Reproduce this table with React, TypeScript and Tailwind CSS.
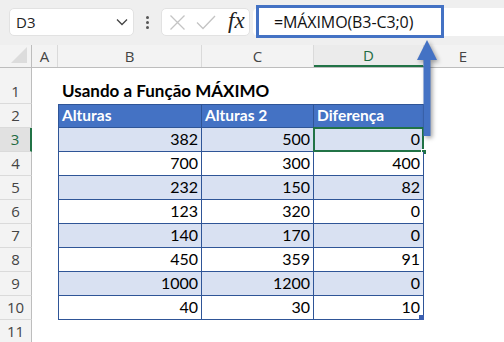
import React from 'react';

const COLS = [
  { key: 'A', w: 'w-[26px]' },
  { key: 'B', w: 'w-[144px]' },
  { key: 'C', w: 'w-[112px]' },
  { key: 'D', w: 'w-[110px]' },
];

const DATA: [number, number, number][] = [
  [382, 500, 0],
  [700, 300, 400],
  [232, 150, 82],
  [123, 320, 0],
  [140, 170, 0],
  [450, 359, 91],
  [1000, 1200, 0],
  [40, 30, 10],
];

const uiFont = { fontFamily: '"Open Sans", "Noto Sans", sans-serif' };
const cellFont = { fontFamily: 'Lato, "Liberation Sans", sans-serif' };

function RowHeader({ n, h, selected }: { n: number; h: string; selected?: boolean }) {
  return (
    <div
      className={`${h} w-[32px] shrink-0 flex items-end justify-center pb-[1px] text-[15px] border-b border-[#dadada] ${
        selected
          ? 'bg-[#e1e1e1] text-[#1e6b41] border-r-2 border-r-[#217346]'
          : 'bg-[#f3f3f3] text-[#444] border-r border-r-[#bdbdbd]'
      }`}
      style={uiFont}
    >
      {n}
    </div>
  );
}

function TopBar() {
  return (
    <div className="relative h-[45px] bg-[#efefef] flex items-start pt-[8px] pl-[9px]" style={uiFont}>
      {/* name box */}
      <div className="w-[125px] h-[28px] bg-white rounded-[5px] border border-[#e2e2e2] flex items-center justify-between pl-[6px] pr-[5px]">
        <span className="text-[15px] text-[#222]">D3</span>
        <svg width="12" height="8" viewBox="0 0 12 8">
          <path d="M1 1.5 L6 6.5 L11 1.5" stroke="#444" strokeWidth="1.3" fill="none" />
        </svg>
      </div>
      {/* dots */}
      <div className="w-[27px] h-[28px] flex flex-col items-center justify-center gap-[2px]">
        <span className="w-[3px] h-[3px] rounded-full bg-[#555]" />
        <span className="w-[3px] h-[3px] rounded-full bg-[#555]" />
        <span className="w-[3px] h-[3px] rounded-full bg-[#555]" />
      </div>
      {/* fx box */}
      <div className="w-[89px] h-[28px] bg-white rounded-[5px] border border-[#e2e2e2] flex items-center pl-[7px] gap-[10px]">
        <svg width="17" height="17" viewBox="0 0 17 17">
          <path d="M1.5 1.5 L15.5 15.5 M15.5 1.5 L1.5 15.5" stroke="#c4c4c4" strokeWidth="1.3" />
        </svg>
        <svg width="20" height="16" viewBox="0 0 20 16">
          <path d="M1 8.5 L7 14.5 L19 2" stroke="#c4c4c4" strokeWidth="1.3" fill="none" />
        </svg>
        <span
          className="text-[23px] italic text-[#222] leading-none -mt-[3px] ml-[2px]"
          style={{ fontFamily: '"Liberation Serif", "DejaVu Serif", serif' }}
        >
          fx
        </span>
      </div>
      {/* formula input */}
      <div className="flex-1 ml-[3px] h-[28px] bg-white rounded-l-[5px]" />
      {/* highlighted formula */}
      <div className="absolute left-[256px] top-[5px] w-[188px] h-[33px] border-[3px] border-[#4472c4] bg-white flex items-center pl-[15px]">
        <span className="text-[16px] text-[#111] tracking-[-0.1px]">=MÁXIMO(B3-C3;0)</span>
      </div>
    </div>
  );
}

function ColumnHeaders() {
  return (
    <div className="flex h-[23px] bg-[#f3f3f3] border-b border-[#bdbdbd]" style={uiFont}>
      <div className="w-[32px] shrink-0 border-r border-[#bdbdbd] relative">
        <svg className="absolute right-[4px] bottom-[4px]" width="16" height="16" viewBox="0 0 16 16">
          <path d="M16 0 L16 16 L0 16 Z" fill="#dcdcdc" />
        </svg>
      </div>
      {COLS.map(c => (
        <div
          key={c.key}
          className={`${c.w} shrink-0 flex items-center justify-center text-[15px] border-r border-[#dadada] ${
            c.key === 'D' ? 'text-[#1e6b41] border-b-2 border-b-[#217346] bg-[#ebebeb]' : 'text-[#444]'
          }`}
        >
          {c.key}
        </div>
      ))}
      <div className="w-[78px] shrink-0 flex items-center justify-center text-[15px] text-[#444]">E</div>
    </div>
  );
}

export default function App() {
  return (
    <div className="relative w-[504px] h-[342px] overflow-hidden bg-white">
      <TopBar />
      <ColumnHeaders />

      {/* row 1 - title */}
      <div className="flex h-[36px]">
        <RowHeader n={1} h="h-[36px]" />
        <div className="w-[26px] shrink-0" />
        <div
          className="flex items-end pb-[1px] pl-[4px] text-[17px] font-bold text-black whitespace-nowrap"
          style={cellFont}
        >
          Usando a Função MÁXIMO
        </div>
      </div>

      {/* row 2 - table header */}
      <div className="flex h-[24px]">
        <RowHeader n={2} h="h-[24px]" />
        <div className="w-[26px] shrink-0" />
        {['Alturas', 'Alturas 2', 'Diferença'].map((t, i) => (
          <div
            key={t}
            className={`${['w-[144px] border-l', 'w-[112px]', 'w-[110px]'][i]} shrink-0 bg-[#4472c4] border-t border-r border-b border-[#2f5597] text-white font-bold text-[15.5px] flex items-end pl-[3px]`}
            style={cellFont}
          >
            {t}
          </div>
        ))}
      </div>

      {/* rows 3-10 */}
      {DATA.map((row, r) => {
        const banded = r % 2 === 0;
        return (
          <div key={r} className="flex h-[24px]">
            <RowHeader n={r + 3} h="h-[24px]" selected={r === 0} />
            <div className="w-[26px] shrink-0" />
            {row.map((v, i) => (
              <div
                key={i}
                className={`${['w-[144px] border-l', 'w-[112px]', 'w-[110px]'][i]} relative shrink-0 border-r border-b border-[#2f5597] ${
                  banded ? 'bg-[#d9e1f2]' : 'bg-white'
                } text-[16px] text-black flex items-end justify-end pr-[3px]`}
                style={cellFont}
              >
                {v}
                {r === 0 && i === 2 && (
                  <>
                    <div className="absolute -left-[1px] -top-[1px] -right-[1px] -bottom-[1px] border-2 border-[#217346]" />
                    <div className="absolute -right-[4px] -bottom-[4px] w-[6px] h-[6px] bg-[#217346] border border-white" />
                  </>
                )}
                {r === 7 && i === 2 && (
                  <div className="absolute -right-[1px] -bottom-[1px] w-[5px] h-[5px] bg-[#3b5fb0]" />
                )}
              </div>
            ))}
          </div>
        );
      })}

      {/* row 11 */}
      <div className="flex h-[24px]">
        <RowHeader n={11} h="h-[24px]" />
      </div>

      {/* arrow from D3 to the formula */}
      <svg
        className="absolute left-[412px] top-[38px]"
        width="32"
        height="104"
        viewBox="0 0 32 104"
        style={{ filter: 'drop-shadow(2px 2px 2px rgba(0,0,0,0.35))' }}
      >
        <path d="M15 2 L25 22 L18.5 22 L18.5 98 L11.5 98 L11.5 22 L5 22 Z" fill="#4472c4" />
      </svg>
    </div>
  );
}
